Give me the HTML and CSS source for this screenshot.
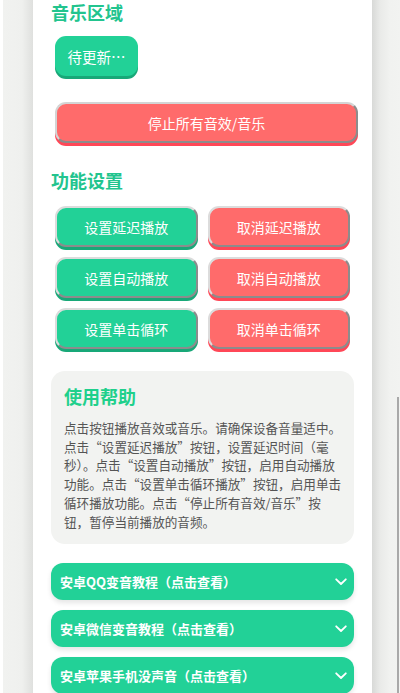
FILE: index.html
```html
<!DOCTYPE html>
<html lang="zh">
<head>
<meta charset="utf-8">
<title>音效</title>
<link rel="stylesheet" href="styles.css">
</head>
<body>
<div class="page">
  <main class="container">
    <h2 class="section-title">音乐区域</h2>
    <div class="music-list">
      <button class="btn-pending">待更新…</button>
    </div>
    <button class="btn-stop">停止所有音效/音乐</button>

    <h2 class="section-title title-func">功能设置</h2>
    <div class="func-grid">
      <button class="btn3d green">设置延迟播放</button>
      <button class="btn3d red">取消延迟播放</button>
      <button class="btn3d green">设置自动播放</button>
      <button class="btn3d red">取消自动播放</button>
      <button class="btn3d green">设置单击循环</button>
      <button class="btn3d red">取消单击循环</button>
    </div>

    <section class="help">
      <h3 class="help-title">使用帮助</h3>
      <p class="help-text">点击按钮播放音效或音乐。请确保设备音量适中。点击“设置延迟播放”按钮，设置延迟时间（毫秒）。点击“设置自动播放”按钮，启用自动播放功能。点击“设置单击循环播放”按钮，启用单击循环播放功能。点击“停止所有音效/音乐”按钮，暂停当前播放的音频。</p>
    </section>

    <div class="accordion">
      <div class="acc-item"><span>安卓QQ变音教程（点击查看）</span><svg class="chev" viewBox="0 0 12 8" width="12" height="8"><path d="M1.2 1.3 L6 6 L10.8 1.3" fill="none" stroke="#fff" stroke-width="1.8" stroke-linecap="round" stroke-linejoin="round"/></svg></div>
      <div class="acc-item"><span>安卓微信变音教程（点击查看）</span><svg class="chev" viewBox="0 0 12 8" width="12" height="8"><path d="M1.2 1.3 L6 6 L10.8 1.3" fill="none" stroke="#fff" stroke-width="1.8" stroke-linecap="round" stroke-linejoin="round"/></svg></div>
      <div class="acc-item"><span>安卓苹果手机没声音（点击查看）</span><svg class="chev" viewBox="0 0 12 8" width="12" height="8"><path d="M1.2 1.3 L6 6 L10.8 1.3" fill="none" stroke="#fff" stroke-width="1.8" stroke-linecap="round" stroke-linejoin="round"/></svg></div>
    </div>
  </main>
</div>
<div class="scrollbar"></div>
</body>
</html>
```
FILE: styles.css
```css
* { box-sizing: border-box; }
html, body { margin: 0; padding: 0; }
body {
  width: 400px;
  height: 693px;
  overflow: hidden;
  font-family: "Noto Sans CJK SC", "Noto Sans", sans-serif;
  background: linear-gradient(to right,
    #ffffff 0, #ffffff 3px,
    #f1f2f0 3px, #eff0ee 22px, #dfe0de 33px,
    #ffffff 33px, #ffffff 372px,
    #d8d9d7 372px, #e9eae8 380px, #f1f2f0 390px, #f2f3f1 400px);
}
.page {
  padding-left: 33px;
}
.container {
  width: 339px;
  padding: 2px 18px 0;
  background: #fff;
}
.section-title {
  margin: 0;
  font-size: 18px;
  line-height: 20px;
  font-weight: 700;
  color: #22c48e;
}
.music-list {
  padding: 14px 4px 0;
}
.btn-pending {
  display: block;
  width: 83px;
  height: 40px;
  border: none;
  border-radius: 11px;
  background: #22d197;
  color: #fff;
  font-family: inherit;
  font-size: 14.5px;
  padding: 0;
  box-shadow: 0 3px 0 #18a878;
}
.btn-stop {
  display: block;
  width: 100%;
  height: 41px;
  margin: 26px 0 0 4px;
  border: 2px solid;
  border-color: #d4d4d4 #8c8c8c #8c8c8c #d4d4d4;
  border-radius: 11px;
  background: #ff6b6b;
  color: #fff;
  font-family: inherit;
  font-size: 14px;
  padding: 0;
  box-shadow: 0 3px 0 #ff4757;
}
.title-func {
  margin-top: 27px;
}
.func-grid {
  display: grid;
  grid-template-columns: 1fr 1fr;
  gap: 10px 10px;
  margin: 16px 4px 0;
}
.btn3d {
  height: 41px;
  border: 2px solid;
  border-color: #dcdcdc #8c8c8c #8c8c8c #dcdcdc;
  border-radius: 11px;
  color: #fff;
  font-family: inherit;
  font-size: 14px;
  padding: 0;
}
.btn3d.green {
  background: #22d197;
  box-shadow: 0 3px 0 #18a878;
}
.btn3d.red {
  background: #ff6b6b;
  box-shadow: 0 3px 0 #ff4757;
}
.help {
  margin-top: 22px;
  background: #f2f3f1;
  border-radius: 14px;
  padding: 13px 11px 13px 13px;
}
.help-title {
  margin: 0;
  font-size: 18px;
  line-height: 24px;
  font-weight: 700;
  color: #1fd08c;
}
.help-text {
  margin: 11px 0 0;
  width: 279px;
  font-size: 12.6px;
  line-height: 18.7px;
  color: #555;
}
.accordion {
  margin-top: 19px;
  display: flex;
  flex-direction: column;
  gap: 10px;
}
.acc-item {
  display: flex;
  align-items: center;
  justify-content: space-between;
  height: 37px;
  padding: 0 7px 0 9px;
  background: #22d197;
  border-radius: 12px;
  color: #fff;
  font-size: 13px;
  font-weight: 700;
  box-shadow: 0 3px 5px rgba(0,0,0,0.10);
}
.chev {
  display: block;
}
.scrollbar {
  position: absolute;
  left: 397px;
  top: 397px;
  width: 2px;
  height: 296px;
  background: #a9a9a9;
}
```
